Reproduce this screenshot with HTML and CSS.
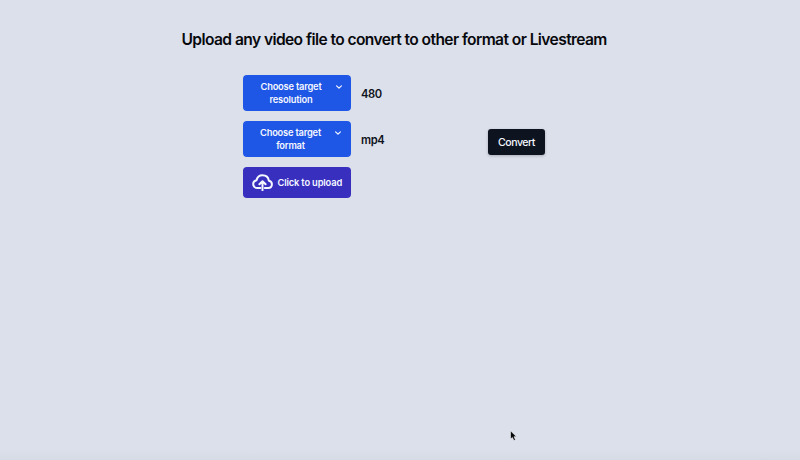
FILE: index.html
```html
<!DOCTYPE html>
<html lang="en">
<head>
<meta charset="utf-8">
<title>Video converter</title>
<link rel="stylesheet" href="styles.css">
</head>
<body>
<main class="page">
  <h1 class="title">Upload any video file to convert to other format or Livestream</h1>
  <div class="converter">
    <div class="options">
      <div class="option">
        <button class="btn select"><span class="label">Choose target<br>resolution</span><svg class="chevron" viewBox="0 0 10 6"><path d="m1 1 4 4 4-4"/></svg></button>
        <span class="value">480</span>
      </div>
      <div class="option">
        <button class="btn select format"><span class="label">Choose target<br>format</span><svg class="chevron" viewBox="0 0 10 6"><path d="m1 1 4 4 4-4"/></svg></button>
        <span class="value">mp4</span>
      </div>
      <button class="btn upload"><svg class="cloud" viewBox="0 0 21 17"><path d="M8.4 14H5.3C2.8 14 1.2 12.2 1.2 10.1c0-2 1.4-3.5 3.3-3.9C5.200 3.200 7.500 1.200 10.500 1.200c3.400 0 5.900 2.300 6.300 5.500 1.900.3 3.100 1.700 3.100 3.600 0 2.100-1.500 3.700-3.700 3.700h-3.400"/><path d="M10.500 16.200V7.600M7.400 10.300l3.100-3.100 3.100 3.100"/></svg><span>Click to upload</span></button>
    </div>
    <button class="convert">Convert</button>
  </div>
</main>
<svg class="cursor" viewBox="0 0 8 12"><path d="M1 .8v8.300l1.900-1.700 1.500 3.200 1.600-.8-1.500-3.100H7z"/></svg>
</body>
</html>
```
FILE: styles.css
```css
* { box-sizing: border-box; }
body {
  margin: 0;
  height: 460px;
  overflow: hidden;
  background: linear-gradient(#dce0eb 0 450px, #d5dae5 460px);
  font-family: Inter, "Liberation Sans", sans-serif;
  color: #0e1320;
}
.page { padding-top: 30px; }
.title {
  margin: 0 0 0 181.5px;
  font-size: 15.6px;
  line-height: 20px;
  font-weight: 600;
  letter-spacing: -0.61px;
  word-spacing: 0.1px;
  white-space: nowrap;
  color: #08090d;
}
.converter {
  display: flex;
  align-items: flex-start;
  margin: 25px 0 0 243px;
}
.options { width: 245px; }
.option { display: flex; align-items: center; gap: 10px; margin-bottom: 10.2px; }
.value {
  padding-top: 1px;
  font-size: 11.2px;
  font-weight: 600;
  line-height: 16px;
  letter-spacing: -0.4px;
}
button { border: 0; margin: 0; padding: 0; font-family: inherit; color: #f5f7ff; }
.btn {
  display: flex;
  width: 108px;
  border-radius: 4px;
  font-size: 9.3px;
  line-height: 13px;
  font-weight: 600;
  letter-spacing: -0.15px;
  white-space: nowrap;
}
.select {
  height: 36px;
  padding: 5px 9.5px 5px 17.5px;
  justify-content: space-between;
  background: #1e56e5;
}
.label { letter-spacing: -0.2px; }
.format { padding: 5px 10.2px 5px 17px; }
.chevron {
  width: 6px;
  height: 4px;
  margin-top: 4.5px;
  overflow: visible;
  fill: none;
  stroke: #f5f7ff;
  stroke-width: 2;
  stroke-linecap: round;
  stroke-linejoin: round;
}
.upload {
  height: 31px;
  align-items: center;
  padding-left: 8.5px;
  gap: 5px;
  background: #382fbf;
}
.cloud {
  width: 21px;
  height: 17px;
  flex: none;
  fill: none;
  stroke: #f5f7ff;
  stroke-width: 2;
  stroke-linecap: round;
  stroke-linejoin: round;
}
.convert {
  width: 57px;
  height: 26px;
  margin-top: 54px;
  border-radius: 3px;
  background: #0e1320;
  box-shadow: 0 1px 3px #0e132040;
  font-size: 10.6px;
  font-weight: 500;
  letter-spacing: -0.5px;
}
.cursor {
  position: absolute;
  left: 509px;
  top: 430px;
  width: 9px;
  height: 12px;
  fill: #050608;
  stroke: #f4f5f8;
  stroke-width: .6;
}
```
